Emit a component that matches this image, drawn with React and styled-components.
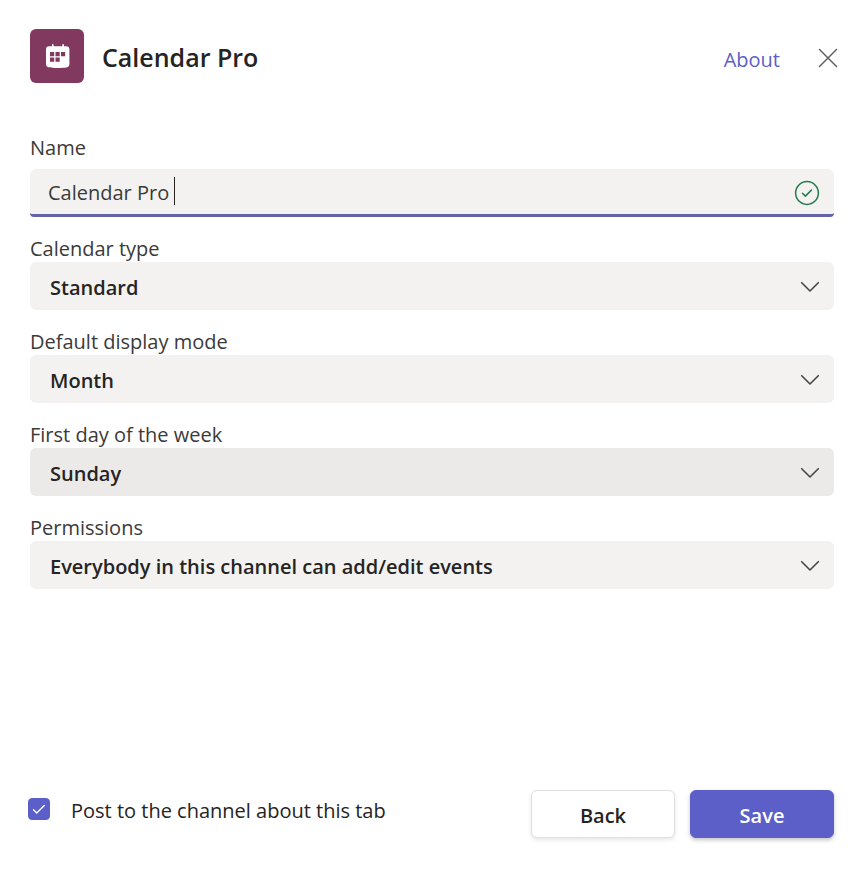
import React, { useState } from "react";
import styled, { createGlobalStyle } from "styled-components";

const GlobalStyle = createGlobalStyle`
  *, *::before, *::after { box-sizing: border-box; }
  body {
    margin: 0;
    background: #ffffff;
    color: #252423;
    font-family: "Segoe UI", "Open Sans", "Noto Sans", sans-serif;
    font-size: 20px;
    line-height: 28px;
  }
  button, input, select { font: inherit; color: inherit; }
`;

const Dialog = styled.form`
  display: flex;
  flex-direction: column;
  min-height: 100vh;
  padding: 29px 22px 32px 30px;
`;

const Header = styled.header`
  display: flex;
  align-items: center;
  gap: 18px;
  margin-bottom: 50px;
`;

const AppIcon = styled.svg`
  display: block;
  flex: none;
  width: 54px;
  height: 54px;
`;

const Title = styled.h1`
  flex: 1;
  margin: 0;
  padding-top: 2px;
  font-size: 25px;
  line-height: 36px;
  font-weight: 600;
`;

const AboutLink = styled.a`
  padding-top: 7px;
  color: #5b5fc7;
  text-decoration: none;
`;

const CloseButton = styled.button`
  display: flex;
  align-items: center;
  justify-content: center;
  width: 36px;
  height: 36px;
  margin: 4px -12px 0 12px;
  padding: 0;
  border: 0;
  background: none;
  color: #616161;
  cursor: pointer;
`;

const Fields = styled.div`
  display: flex;
  flex-direction: column;
  gap: 17px;
`;

const Field = styled.div`
  display: flex;
  flex-direction: column;
  gap: ${({ $gap }) => $gap || 0}px;
`;

const Label = styled.label`
  padding-top: 2px;
  color: #3b3a39;
  line-height: 26px;
`;

const Control = styled.div`
  display: grid;
  align-items: center;
  > * { grid-area: 1 / 1; }
`;

const TextInput = styled.input`
  width: 100%;
  height: 48px;
  padding: 2px 56px 0 18px;
  border: 0;
  border-bottom: 3px solid #6264a7;
  border-radius: 6px 6px 4px 4px;
  outline: none;
  background: #f3f2f1;
  color: #3b3a39;
  caret-color: transparent;
`;

const Caret = styled.span`
  justify-self: start;
  height: 28px;
  margin: 0 0 4px 18px;
  border-right: 1px solid #252423;
  color: transparent;
  white-space: pre;
  pointer-events: none;
  user-select: none;
`;

const ControlIcon = styled.svg`
  justify-self: end;
  width: ${({ $size }) => $size}px;
  height: ${({ $size }) => $size}px;
  margin-right: 14px;
  fill: none;
  stroke: ${({ $color }) => $color};
  pointer-events: none;
`;

const Select = styled.select`
  appearance: none;
  width: 100%;
  height: 48px;
  padding: 4px 48px 0 20px;
  border: 0;
  border-radius: 6px;
  background: ${({ $active }) => ($active ? "#ebeae9" : "#f3f2f1")};
  font-weight: 600;
  cursor: pointer;
`;

const Footer = styled.footer`
  display: flex;
  align-items: center;
  gap: 15px;
  margin-top: auto;
`;

const CheckLabel = styled.label`
  display: flex;
  align-items: center;
  gap: 21px;
  margin: 0 auto 6px -2px;
  cursor: pointer;
`;

const Checkbox = styled.input`
  appearance: none;
  flex: none;
  width: 22px;
  height: 22px;
  margin: 0;
  border: 1px solid #5b5fc7;
  border-radius: 4px;
  background: #ffffff;
  &:checked { background: #5b5fc7; }
`;

const CheckBoxFrame = styled.span`
  display: grid;
  place-items: center;
  padding-bottom: 4px;
  > * { grid-area: 1 / 1; }
`;

const Button = styled.button`
  width: 144px;
  height: 48px;
  padding: 3px 0 0;
  border: 1px solid ${({ $primary }) => ($primary ? "#5b5fc7" : "#e1dfdd")};
  border-radius: 6px;
  background: ${({ $primary }) => ($primary ? "#5b5fc7" : "#ffffff")};
  color: ${({ $primary }) => ($primary ? "#ffffff" : "#252423")};
  box-shadow: 0 2px 4px rgba(0, 0, 0, ${({ $primary }) => ($primary ? 0.24 : 0.1)});
  font-weight: 600;
  cursor: pointer;
`;

const selects = [
  { id: "type", label: "Calendar type", options: ["Standard"] },
  { id: "mode", label: "Default display mode", options: ["Month", "Week", "Day"] },
  { id: "first-day", label: "First day of the week", options: ["Sunday", "Monday"], active: true },
  { id: "permissions", label: "Permissions", options: ["Everybody in this channel can add/edit events"] },
];

function SelectField({ id, label, options, active }) {
  return (
    <Field>
      <Label htmlFor={id}>{label}</Label>
      <Control>
        <Select id={id} $active={active}>
          {options.map((option) => <option key={option}>{option}</option>)}
        </Select>
        <ControlIcon $size={20} $color="#484644" viewBox="0 0 20 20" aria-hidden="true">
          <path d="M1.700 6.700 10 15l8.300-8.300" strokeWidth="1.600" strokeLinecap="round" strokeLinejoin="round" />
        </ControlIcon>
      </Control>
    </Field>
  );
}

export default function App() {
  const [name, setName] = useState("Calendar Pro ");
  return (
    <>
      <GlobalStyle />
      <Dialog onSubmit={(event) => event.preventDefault()}>
        <Header>
          <AppIcon viewBox="0 0 54 54" aria-hidden="true">
            <rect width="54" height="54" rx="6" fill="#81395f" />
            <path d="M19 17.3h3v-1.500a.8.8 0 0 1 1.600 0v1.500h8.700v-1.500a.8.8 0 0 1 1.600 0v1.500H36.200a3.200 3.200 0 0 1 3.200 3.200V35.500a2.800 2.800 0 0 1-2.200 2.700c-3 .6-6 .8-9.600.8s-6.600-.2-9.300-.8A2.800 2.800 0 0 1 16 35.500V20.300a3 3 0 0 1 3-3Z" fill="#fff" />
            <path d="M20 23h4.200v4.200H20ZM25.500 23h4.200v4.200h-4.200ZM31 23h4.200v4.200H31ZM20 28.500h4.200v4.200H20ZM25.500 28.500h4.200v4.200h-4.200Z" fill="#81395f" />
          </AppIcon>
          <Title>Calendar Pro</Title>
          <AboutLink href="#about">About</AboutLink>
          <CloseButton type="button" aria-label="Close">
            <svg width="20" height="20" viewBox="0 0 20 20" fill="none" stroke="currentColor" strokeWidth="1.5" strokeLinecap="round">
              <path d="m1.500 1.500 17 17M18.500 1.500l-17 17" />
            </svg>
          </CloseButton>
        </Header>
        <Fields>
          <Field $gap={8}>
            <Label htmlFor="name">Name</Label>
            <Control>
              <TextInput id="name" value={name} onChange={(event) => setName(event.target.value)} />
              <Caret aria-hidden="true">{name}</Caret>
              <ControlIcon $size={26} $color="#237b4b" viewBox="0 0 26 26" aria-hidden="true">
                <circle cx="13" cy="13" r="11.400" strokeWidth="1.500" />
                <path d="m8.500 13.200 2.900 2.900 6-6" strokeWidth="1.500" strokeLinecap="round" strokeLinejoin="round" />
              </ControlIcon>
            </Control>
          </Field>
          {selects.map((field) => <SelectField key={field.id} {...field} />)}
        </Fields>
        <Footer>
          <CheckLabel>
            <CheckBoxFrame>
              <Checkbox type="checkbox" defaultChecked />
              <svg width="14" height="14" viewBox="0 0 14 14" fill="none" stroke="#fff" strokeWidth="1.400" strokeLinecap="round" strokeLinejoin="round" aria-hidden="true">
                <path d="m1.500 7.700 3.200 3.200 7.600-7.500" />
              </svg>
            </CheckBoxFrame>
            Post to the channel about this tab
          </CheckLabel>
          <Button type="button">Back</Button>
          <Button type="submit" $primary>Save</Button>
        </Footer>
      </Dialog>
    </>
  );
}
